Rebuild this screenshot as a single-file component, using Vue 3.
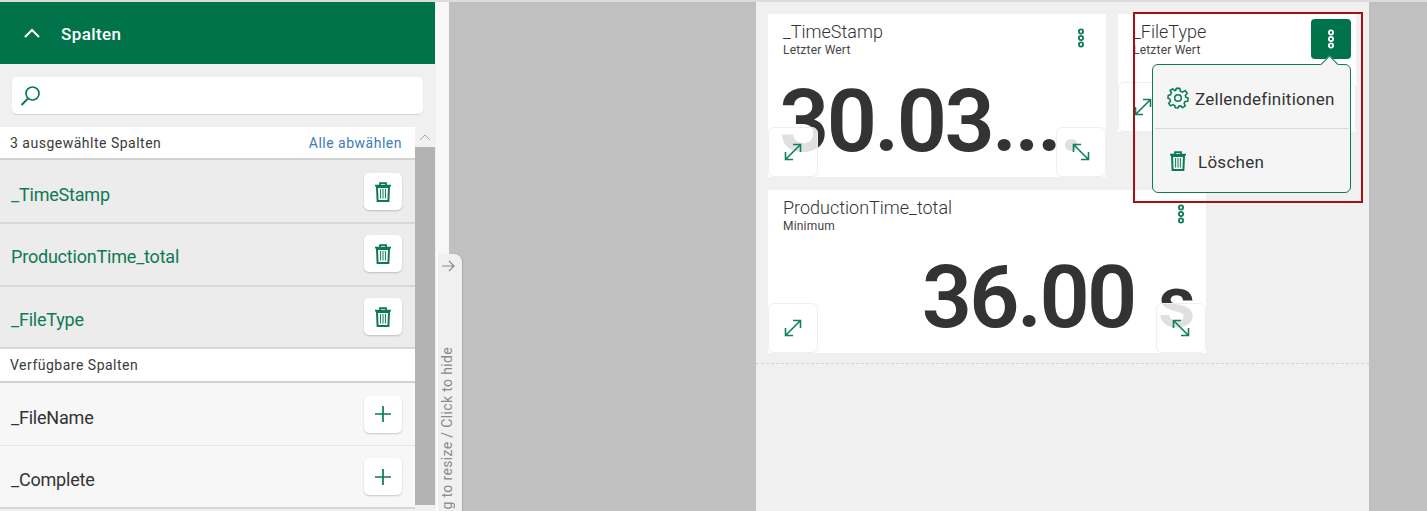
<script setup>
const selected = ['_TimeStamp', 'ProductionTime_total', '_FileType']
const available = ['_FileName', '_Complete']
</script>

<template>
  <div class="page">
    <aside class="panel">
      <header class="panel-head">
        <svg class="chev" width="18" height="12" viewBox="0 0 18 12"><path d="M2 10 L9 3 L16 10" fill="none" stroke="#fff" stroke-width="2"/></svg>
        <span>Spalten</span>
      </header>
      <div class="search-wrap">
        <div class="search">
          <svg width="22" height="22" viewBox="0 0 22 22"><circle cx="12.5" cy="8.5" r="6.5" fill="none" stroke="#0b7a52" stroke-width="1.7"/><path d="M8 13.5 L1.5 20" stroke="#0b7a52" stroke-width="2" fill="none"/></svg>
        </div>
      </div>
      <div class="list-area">
        <div class="list">
          <div class="section sel-head">
            <span>3 ausgewählte Spalten</span>
            <a class="link">Alle abwählen</a>
          </div>
          <div v-for="s in selected" :key="s" class="row selected">
            <span class="row-label">{{ s }}</span>
            <button class="row-btn">
              <svg width="18" height="20" viewBox="0 0 18 20"><path d="M1 3.6 H17 M6 3 V1.2 H12 V3" fill="none" stroke="#0b7a52" stroke-width="1.8"/><path d="M3 5 H15 L14.4 19 H3.6 Z" fill="none" stroke="#0b7a52" stroke-width="2"/><path d="M6.6 7 V16.5 M9 7 V16.5 M11.4 7 V16.5" stroke="#0b7a52" stroke-width="1"/></svg>
            </button>
          </div>
          <div class="section avail-head">Verfügbare Spalten</div>
          <div v-for="a in available" :key="a" class="row">
            <span class="row-label">{{ a }}</span>
            <button class="row-btn">
              <svg width="18" height="18" viewBox="0 0 18 18"><path d="M9 1 V17 M1 9 H17" stroke="#0b7a52" stroke-width="1.7" fill="none"/></svg>
            </button>
          </div>
        </div>
        <div class="scrollbar">
          <div class="sb-up"><svg width="12" height="7" viewBox="0 0 12 7"><path d="M1 6 L6 1 L11 6" fill="none" stroke="#a8a8a8" stroke-width="1"/></svg></div>
          <div class="sb-thumb"></div>
        </div>
      </div>
    </aside>

    <div class="splitter">
      <div class="handle">
        <svg class="handle-arrow" width="14" height="12" viewBox="0 0 14 12"><path d="M1 6 H13 M8 1 L13 6 L8 11" fill="none" stroke="#8a8a8a" stroke-width="1.2"/></svg>
        <span class="handle-text">Drag to resize / Click to hide</span>
      </div>
    </div>

    <main class="stage">
      <div class="sheet">
        <div class="card-row first">
          <section class="card w338">
            <div class="card-title">_TimeStamp</div>
            <div class="card-sub">Letzter Wert</div>
            <svg class="kebab" width="10" height="20" viewBox="0 0 10 20"><g fill="none" stroke="#0b7a52" stroke-width="1.8"><circle cx="5" cy="3.5" r="2.1"/><circle cx="5" cy="10" r="2.1"/><circle cx="5" cy="16.5" r="2.1"/></g></svg>
            <div class="big left">30.03....</div>
            <button class="corner bl">
              <svg width="18" height="18" viewBox="0 0 18 18"><path d="M1.5 16.5 L16.5 1.5 M9 1.5 H16.5 V9 M1.5 9 V16.5 H9" fill="none" stroke="#0f8058" stroke-width="1.6"/></svg>
            </button>
            <button class="corner br">
              <svg width="18" height="18" viewBox="0 0 18 18"><path d="M1.5 1.5 L16.5 16.5 M9 1.5 H1.5 V9 M16.5 9 V16.5 H9" fill="none" stroke="#0f8058" stroke-width="1.6"/></svg>
            </button>
          </section>
          <section class="card short">
            <div class="card-title">_FileType</div>
            <div class="card-sub">Letzter Wert</div>
            <button class="corner bl">
              <svg width="18" height="18" viewBox="0 0 18 18"><path d="M1.5 16.5 L16.5 1.5 M9 1.5 H16.5 V9 M1.5 9 V16.5 H9" fill="none" stroke="#0f8058" stroke-width="1.6"/></svg>
            </button>
            <button class="corner br"></button>
          </section>
        </div>
        <div class="card-row">
          <section class="card w438">
            <div class="card-title">ProductionTime_total</div>
            <div class="card-sub">Minimum</div>
            <svg class="kebab" width="10" height="20" viewBox="0 0 10 20"><g fill="none" stroke="#0b7a52" stroke-width="1.8"><circle cx="5" cy="3.5" r="2.1"/><circle cx="5" cy="10" r="2.1"/><circle cx="5" cy="16.5" r="2.1"/></g></svg>
            <div class="big right">36.00 <span class="unit">s</span></div>
            <button class="corner bl">
              <svg width="18" height="18" viewBox="0 0 18 18"><path d="M1.5 16.5 L16.5 1.5 M9 1.5 H16.5 V9 M1.5 9 V16.5 H9" fill="none" stroke="#0f8058" stroke-width="1.6"/></svg>
            </button>
            <button class="corner br">
              <svg width="18" height="18" viewBox="0 0 18 18"><path d="M1.5 1.5 L16.5 16.5 M9 1.5 H1.5 V9 M16.5 9 V16.5 H9" fill="none" stroke="#0f8058" stroke-width="1.6"/></svg>
            </button>
          </section>
        </div>
        <div class="dashed"></div>

        <div class="highlight"></div>
        <button class="kebab-active">
          <svg width="10" height="20" viewBox="0 0 10 20"><g fill="none" stroke="#fff" stroke-width="1.8"><circle cx="5" cy="3.5" r="2.1"/><circle cx="5" cy="10" r="2.1"/><circle cx="5" cy="16.5" r="2.1"/></g></svg>
        </button>
        <div class="menu">
          <span class="menu-notch"></span>
          <div class="menu-item first-item">
            <svg width="22" height="22" viewBox="0 0 24 24"><path d="M10 1.5 H14 L14.6 4.6 L17 5.6 L19.7 3.9 L22.1 6.9 L20 9.2 L20.6 11.2 L23 12 L22.6 15.6 L19.8 15.8 L18.6 18 L20 20.6 L17 22.6 L15 20.6 L12.6 21 L12 23 L9 22.6 L8.6 20.4 L6.4 19.2 L3.8 20.6 L1.8 17.8 L3.8 15.6 L3.2 13.2 L1 12 L1.4 9 L3.8 8.6 L4.8 6.2 L3.4 3.8 L6.2 2 L8.4 4 L9.6 3.6 Z" fill="none" stroke="#0b7a52" stroke-width="1.7" stroke-linejoin="round"/><circle cx="12" cy="12" r="3.6" fill="none" stroke="#0b7a52" stroke-width="1.7"/></svg>
            <span class="menu-label">Zellendefinitionen</span>
          </div>
          <div class="menu-item second-item">
            <svg width="18" height="20" viewBox="0 0 18 20"><path d="M1 3.6 H17 M6 3 V1.2 H12 V3" fill="none" stroke="#0b7a52" stroke-width="1.8"/><path d="M3 5 H15 L14.4 19 H3.6 Z" fill="none" stroke="#0b7a52" stroke-width="2"/><path d="M6.6 7 V16.5 M9 7 V16.5 M11.4 7 V16.5" stroke="#0b7a52" stroke-width="1"/></svg>
            <span class="menu-label">Löschen</span>
          </div>
        </div>
      </div>
    </main>
  </div>
</template>

<style scoped>
.page {
  width: 1427px;
  height: 511px;
  box-sizing: border-box;
  border-top: 2px solid #dcdcdc;
  display: flex;
  overflow: hidden;
  font-family: Roboto, "Liberation Sans", sans-serif;
  color: #333;
  background: #c0c0c0;
}
.panel {
  width: 435px;
  flex: none;
  background: #f0f0f0;
  display: flex;
  flex-direction: column;
}
.panel-head {
  height: 62px;
  flex: none;
  background: #00734a;
  color: #fff;
  display: flex;
  align-items: center;
  gap: 20px;
  padding-left: 23px;
  font-size: 17px;
  font-weight: 500;
  letter-spacing: 0.4px;
}
.panel-head span { padding-top: 2px; }
.search-wrap {
  height: 63px;
  flex: none;
  padding: 13px 12px;
  box-sizing: border-box;
}
.search {
  height: 37px;
  background: #fff;
  border-radius: 5px;
  box-shadow: 0 1px 1px rgba(0, 0, 0, 0.12);
  display: flex;
  align-items: center;
  padding-left: 8px;
}
.list-area {
  flex: 1;
  display: flex;
  min-height: 0;
}
.list {
  width: 415px;
  flex: none;
}
.section {
  background: #fff;
  font-size: 14px;
  letter-spacing: 0.5px;
  padding: 0 13px 0 10px;
  display: flex;
  align-items: center;
  justify-content: space-between;
  box-sizing: border-box;
  border-bottom: 2px solid #d2d2d2;
  color: #3a3a3a;
}
.sel-head { height: 33px; }
.avail-head { height: 34px; }
.link { color: #3c7cb8; }
.row {
  height: 63px;
  box-sizing: border-box;
  background: #f7f7f7;
  border-bottom: 1px solid #e6e6e6;
  padding: 0 13px 0 11px;
  display: flex;
  align-items: center;
  justify-content: space-between;
  font-size: 18px;
  letter-spacing: -0.2px;
  color: #333;
}
.row-label { padding-top: 6px; }
.row:last-child { border-bottom: 2px solid #d8d8d8; }
.row.selected {
  background: #ececec;
  border-bottom: 2px solid #d8d8d8;
  color: #0f7a52;
}
.row.selected:nth-child(2) { height: 64px; padding-top: 1px; }
.row.selected:nth-child(3) { padding-bottom: 2px; }
.row.selected:nth-child(4) { height: 62px; padding-bottom: 1px; }
.row-btn {
  width: 38px;
  height: 37px;
  padding: 0;
  border: 0;
  border-radius: 5px;
  background: #fff;
  box-shadow: 0 1px 2px rgba(0, 0, 0, 0.2);
  display: flex;
  align-items: center;
  justify-content: center;
}
.scrollbar {
  width: 20px;
  flex: none;
  display: flex;
  flex-direction: column;
}
.sb-up {
  height: 20px;
  display: flex;
  align-items: center;
  justify-content: center;
  background: #f0f0f0;
}
.sb-thumb {
  height: 358px;
  background: #b3b3b3;
}
.splitter {
  width: 14px;
  box-sizing: border-box;
  flex: none;
  background: #f8f8f8;
  border-left: 1px solid #f0f0f0;
  position: relative;
}
.handle {
  position: absolute;
  left: 1px;
  top: 252px;
  width: 25px;
  height: 260px;
  background: #f0f0f0;
  border-left: 1px solid #fff;
  box-sizing: border-box;
  border-radius: 0 8px 0 0;
  box-shadow: 1px 0 1px rgba(0, 0, 0, 0.1);
}
.handle-arrow {
  position: absolute;
  left: 3px;
  top: 6px;
}
.handle-text {
  position: absolute;
  left: 1px;
  bottom: -18px;
  white-space: nowrap;
  font-size: 14px;
  letter-spacing: 0.35px;
  color: #8a8a8a;
  writing-mode: vertical-rl;
  transform: rotate(180deg);
  line-height: 16px;
  width: 16px;
}
.stage {
  flex: 1;
  padding-left: 307px;
  padding-right: 58px;
}
.sheet {
  height: 100%;
  background: #f0f0f0;
  padding: 12px 12px 0;
  box-sizing: border-box;
  position: relative;
  display: flex;
  flex-direction: column;
  gap: 13px;
}
.card-row {
  display: flex;
  gap: 12px;
  align-items: flex-start;
}
.card {
  position: relative;
  background: #fff;
  height: 163px;
  padding: 8px 15px;
  box-sizing: border-box;
}
.w338 { width: 338px; }
.w438 { width: 438px; }
.short {
  width: 238px;
  height: 118px;
}
.card-title {
  font-size: 18px;
  font-weight: 300;
  line-height: 20px;
  color: #333;
}
.card-sub {
  font-size: 12px;
  line-height: 15px;
  margin-top: 1px;
  color: #444;
  letter-spacing: 0.2px;
}
.kebab {
  position: absolute;
  top: 14px;
  right: 20px;
}
.big {
  position: absolute;
  top: 62px;
  font-size: 88px;
  line-height: 90px;
  font-weight: 600;
  color: #333;
  white-space: nowrap;
}
.big.left { left: 11px; letter-spacing: -2.6px; }
.big.right { right: 13px; letter-spacing: -2.6px; }
.unit { font-size: 73px; margin-left: 4px; }
.corner {
  position: absolute;
  bottom: 0;
  width: 50px;
  height: 50px;
  padding: 0;
  background: rgba(255, 255, 255, 0.85);
  border: 1px solid #efefef;
  border-radius: 6px;
  display: flex;
  align-items: center;
  justify-content: center;
}
.bl { left: 0; }
.br { right: 0; }
.dashed {
  position: absolute;
  left: 0;
  right: 0;
  top: 361px;
  border-top: 1px dashed #d4d4d4;
}
.highlight {
  position: absolute;
  left: 377px;
  top: 10px;
  width: 226px;
  height: 187px;
  border: 2px solid #a80f14;
  z-index: 3;
}
.kebab-active {
  position: absolute;
  left: 555px;
  top: 17px;
  width: 40px;
  height: 40px;
  padding: 0;
  border: 0;
  border-radius: 4px;
  background: #00734a;
  display: flex;
  align-items: center;
  justify-content: center;
  z-index: 4;
}
.menu {
  position: absolute;
  left: 396px;
  top: 62px;
  width: 199px;
  height: 129px;
  box-sizing: border-box;
  background: #f5f5f5;
  border: 1px solid #0f7a52;
  border-radius: 6px;
  z-index: 4;
  display: flex;
  flex-direction: column;
  font-size: 17px;
  letter-spacing: 0.25px;
  color: #333;
}
.menu-notch {
  position: absolute;
  right: 14px;
  top: -7px;
  width: 12px;
  height: 12px;
  background: #f5f5f5;
  border-left: 1px solid #0f7a52;
  border-top: 1px solid #0f7a52;
  transform: rotate(45deg);
}
.menu-label { padding-top: 2px; }
.menu-item {
  display: flex;
  align-items: center;
  box-sizing: border-box;
  padding: 0 0 0 14px;
  margin: 0 2px;
}
.first-item {
  height: 64px;
  gap: 6px;
  border-bottom: 1px solid #d8d8d8;
  padding: 4px 0 0 12px;
}
.second-item {
  height: 64px;
  gap: 11px;
  padding-top: 2px;
}
</style>

<style>
html, body { margin: 0; padding: 0; }
</style>
